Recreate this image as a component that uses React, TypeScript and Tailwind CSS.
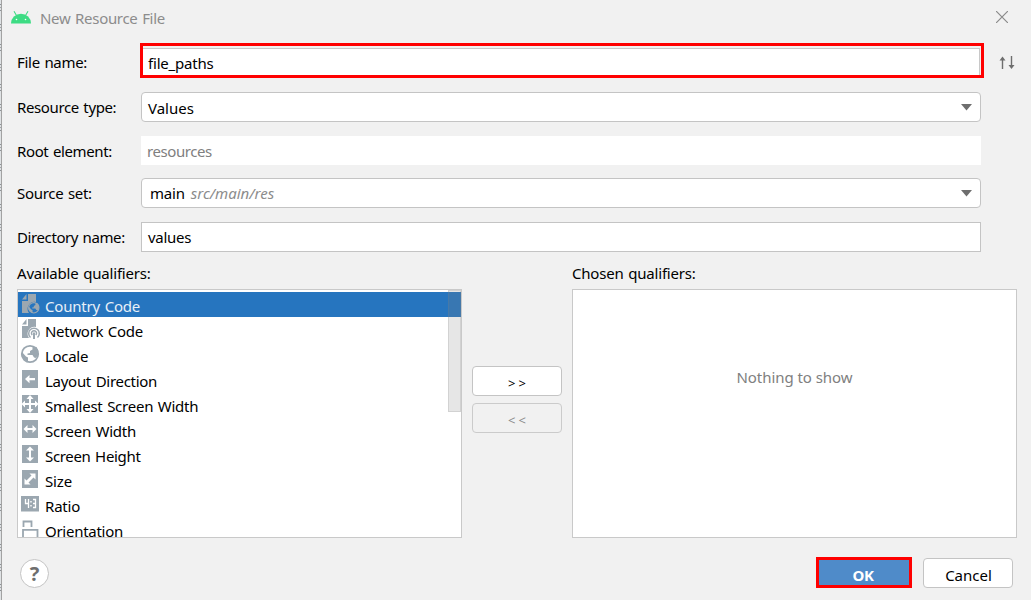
import React from "react";

const GREY = "#9ba7b0";

function Sheet() {
  return (
    <>
      <path d="M8 0h8v8a7 7 0 0 0-7 11H2V7h6z" fill={GREY} />
      <path d="M2 5.5L6.5 0v5.5z" fill={GREY} />
    </>
  );
}

function Globe() {
  return (
    <>
      <circle cx="10" cy="10" r="8.2" fill="none" stroke={GREY} strokeWidth="1.8" />
      <path d="M2 8l4 4.5 2 1v4.5l-4-2-2.500-4zM12.500 2.500v3l-2.500 1.500v2l-2.500.5v1.500h5l1.500 2.500 2 .5 2-3 .5-4-2-4z" fill={GREY} />
    </>
  );
}

function Box() {
  return <rect x="2" y="1" width="16" height="18" fill={GREY} />;
}

function QualifierIcon({ name }: { name: string }) {
  return (
    <svg viewBox="0 0 20 20" className="block h-5 w-5 shrink-0 overflow-visible">
      {name === "country" && (
        <>
          <Sheet />
          <g transform="translate(7.500 7.500) scale(.63)">
            <Globe />
          </g>
        </>
      )}
      {name === "network" && (
        <>
          <Sheet />
          <path d="M10.500 18.500a5.300 5.300 0 1 1 7 0M12.300 16a2.500 2.500 0 1 1 3.400 0" fill="none" stroke={GREY} strokeWidth="1.500" />
          <path d="M14 13.500V20" stroke={GREY} strokeWidth="2" />
        </>
      )}
      {name === "locale" && <Globe />}
      {name === "direction" && (
        <>
          <Box />
          <path d="M5 10l4.500-4v3H15v2.200H9.500v3z" fill="#fff" />
        </>
      )}
      {name === "smallest" && (
        <>
          <Box />
          <path d="M10 1l3.500 4H11v2.500H9V5H6.500zM10 19l-3.500-4H9v-2.500h2V15h2.500zM1.500 10L5 6.500V9h2.500v2H5v2.500zM18.500 10L15 13.500V11h-2.500V9H15V6.500z" fill="#fff" />
          <path d="M9 7v6h2V7zM7 9v2h6V9z" fill="#fff" />
        </>
      )}
      {name === "width" && (
        <>
          <Box />
          <path d="M3.500 10L7.500 6v3h5V6l4 4-4 4v-3h-5v3z" fill="#fff" />
        </>
      )}
      {name === "height" && (
        <>
          <Box />
          <path d="M10 2.500l4 4h-3v7h3l-4 4-4-4h3v-7H6z" fill="#fff" />
        </>
      )}
      {name === "size" && (
        <>
          <Box />
          <path d="M15.500 4.500v6l-2-2-5 5 2 2h-6v-6l2 2 5-5-2-2z" fill="#fff" />
        </>
      )}
      {name === "ratio" && (
        <>
          <rect x="1" y="2" width="18" height="15.500" fill={GREY} />
          <path d="M5.500 5v4.500h3.500M8.500 5v9M13 5.500h2.500v8H13M13 9.500h3" fill="none" stroke="#fff" strokeWidth="1.300" />
          <path d="M10.300 7h1.400v1.500h-1.400zM10.300 11h1.400v1.500h-1.400z" fill="#fff" />
        </>
      )}
      {name === "orientation" && (
        <path d="M3.500 8V2.500h8V8M3 20v-9.200h14.500V20" fill="none" stroke={GREY} strokeWidth="1.800" />
      )}
    </svg>
  );
}

const qualifiers = [
  { icon: "country", label: "Country Code", cls: "tracking-[-0.2px]" },
  { icon: "network", label: "Network Code", cls: "tracking-[-0.3px]" },
  { icon: "locale", label: "Locale", cls: "tracking-[-0.3px]" },
  { icon: "direction", label: "Layout Direction", cls: "tracking-[-0.28px]" },
  { icon: "smallest", label: "Smallest Screen Width", cls: "tracking-[-0.25px]" },
  { icon: "width", label: "Screen Width", cls: "tracking-[-0.27px]" },
  { icon: "height", label: "Screen Height", cls: "tracking-[-0.33px]" },
  { icon: "size", label: "Size", cls: "tracking-[-0.15px]" },
  { icon: "ratio", label: "Ratio", cls: "tracking-[-0.2px]" },
  { icon: "orientation", label: "Orientation", cls: "tracking-[-0.27px]" },
];

function Arrow() {
  return (
    <svg viewBox="0 0 11 7" className="mr-[8px] block h-[7px] w-[11px]">
      <path d="M0 0h11L5.500 6.500z" fill="#6e6e6e" />
    </svg>
  );
}

function Row({ label, labelClass, className, children }: { label: string; labelClass: string; className: string; children: React.ReactNode }) {
  return (
    <div className={`flex items-center ${className}`}>
      <div className={`w-[125px] shrink-0 pl-px [word-spacing:1px] ${labelClass}`}>{label}</div>
      {children}
    </div>
  );
}

function EdgeStrip() {
  return (
    <div className="flex w-[2px] shrink-0 flex-col overflow-hidden border-r border-[#a2a2a2] bg-[#dfe2e4]">
      {Array.from({ length: 30 }, (_, i) => (
        <div key={i} className="flex h-5 shrink-0 flex-col justify-start pt-[4px]">
          <div className="h-px bg-[#8d9296]" />
          <div className="mt-[2px] h-px bg-[#a3a8ac]" />
          <div className="mt-[2px] h-px bg-[#8d9296]" />
        </div>
      ))}
    </div>
  );
}

export default function App() {
  return (
    <div className="flex h-[600px] w-[1031px] overflow-hidden bg-[#f1f1f1] font-['Noto_Sans','Open_Sans',sans-serif] text-[15px] leading-[20px] whitespace-nowrap text-black">
      <EdgeStrip />
      <div className="flex min-w-0 flex-1 flex-col pl-[14px]">
        <header className="flex h-[43px] shrink-0 items-start">
          <svg viewBox="0 0 20 13" className="mt-[11px] -ml-[5px] block h-[13px] w-5">
            <path d="M0 12.500a10 9.800 0 0 1 20 0z" fill="#3ddc84" />
            <path d="M3 .3L5.500 4.500M17 .3L14.500 4.500" stroke="#3ddc84" strokeWidth="1.100" />
            <circle cx="5.500" cy="8.500" r=".8" fill="#fff" />
            <circle cx="14.500" cy="8.500" r=".8" fill="#fff" />
          </svg>
          <div className="mt-[8px] ml-[9px] flex-1 tracking-[-0.3px] text-[#8c8c8c] [word-spacing:1px]">New Resource File</div>
          <svg viewBox="0 0 12 12" className="mt-[11px] mr-[23px] block h-3 w-3">
            <path d="M0 0l12 12M12 0L0 12" stroke="#8a8a8a" strokeWidth="1.200" />
          </svg>
        </header>

        <Row label="File name:" labelClass="pt-[3px] tracking-[-0.3px]" className="h-[35px]">
          <div className="-ml-px flex h-[35px] w-[844px] shrink-0 border-[3px] border-[#ff0000] pt-[2px] pr-px">
            <div className="flex flex-1 items-center border-t border-r border-[#c8c8c8] bg-white pt-px pl-[5px] tracking-[-0.2px]">file_paths</div>
          </div>
          <svg viewBox="0 0 16 14" className="mt-[5px] ml-[15px] block h-[14px] w-4">
            <path d="M3.500 13V2M12.500 0v11" stroke="#6e6e6e" strokeWidth="1.400" />
            <path d="M.5 4.500L3.500.500l3 4zM9.500 9l3 4 3-4z" fill="#6e6e6e" />
          </svg>
        </Row>

        <Row label="Resource type:" labelClass="tracking-[-0.38px]" className="mt-[14px] h-[30px]">
          <div className="flex h-[30px] w-[840px] items-center justify-between rounded-[4px] border border-[#c4c4c4] bg-white pl-[6px]">
            <span className="pt-[2px]">Values</span>
            <Arrow />
          </div>
        </Row>

        <Row label="Root element:" labelClass="tracking-[-0.38px]" className="mt-[14px] h-[29px]">
          <div className="flex h-[29px] w-[840px] items-center bg-white pl-[6px] tracking-[-0.42px] text-[#808080]">resources</div>
        </Row>

        <Row label="Source set:" labelClass="tracking-[-0.3px]" className="mt-[13px] h-[30px]">
          <div className="flex h-[30px] w-[840px] items-center justify-between rounded-[4px] border border-[#c4c4c4] bg-white pl-[8px]">
            <span className="flex">
              <span className="tracking-[-0.2px]">main</span>
              <span className="ml-[6px] text-[#8c8c8c] italic">src/main/res</span>
            </span>
            <Arrow />
          </div>
        </Row>

        <Row label="Directory name:" labelClass="tracking-[-0.4px]" className="mt-[14px] h-[30px]">
          <div className="flex h-[30px] w-[840px] items-center border border-[#c4c4c4] bg-white pl-[6px] tracking-[-0.3px]">values</div>
        </Row>

        <div className="mt-[11px] flex h-[26px] shrink-0 tracking-[-0.2px] [word-spacing:1px]">
          <div className="w-[556px] pl-px">Available qualifiers:</div>
          <div>Chosen qualifiers:</div>
        </div>

        <main className="flex h-[249px] shrink-0 pl-px">
          <div className="relative flex w-[445px] shrink-0 flex-col overflow-hidden border border-[#c9c9c9] bg-white pt-[2px]">
            {qualifiers.map((q, i) => (
              <div key={q.icon} className={`flex h-[25px] shrink-0 items-start pl-[2px] ${i === 0 ? "bg-[#2675bf] text-[#e8f0f8]" : ""}`}>
                <div className="pt-[2px]">
                  <QualifierIcon name={q.icon} />
                </div>
                <span className={`ml-[5px] pt-[4px] [word-spacing:1px] ${q.cls}`}>{q.label}</span>
              </div>
            ))}
            <div className="absolute top-0 right-0 h-[122px] w-[13px] border border-[#808080]/20 bg-[#808080]/20" />
          </div>

          <div className="flex w-[110px] shrink-0 flex-col items-center gap-[7px] pt-[77px]">
            <button className="flex h-[30px] w-[90px] items-center justify-center rounded-[4px] border border-[#c4c4c4] bg-white pt-[4px] pl-[3px] text-[13px] tracking-[3px]">&gt;&gt;</button>
            <button className="flex h-[30px] w-[90px] items-center justify-center rounded-[4px] border border-[#cbcbcb] pt-[4px] pl-[3px] text-[13px] tracking-[3px] text-[#8c8c8c]">&lt;&lt;</button>
          </div>

          <div className="flex w-[445px] shrink-0 justify-center border border-[#c9c9c9] bg-white pt-[77px] tracking-[-0.05px] text-[#808080]">Nothing to show</div>
        </main>

        <footer className="flex flex-1 items-start pt-[19px]">
          <div className="mt-[2px] ml-[4px] flex h-[29px] w-[29px] items-center justify-center rounded-full border border-[#c4c4c4] bg-white text-[20px] font-bold text-[#6e6e6e]">?</div>
          <button className="ml-[767px] flex h-[31px] w-[96px] items-center justify-center border-[3px] border-[#ff0000] bg-[#4f8bc9] pt-[4px] pr-[2px] font-bold tracking-[-0.3px] text-white">OK</button>
          <button className="mt-px ml-[11px] flex h-[30px] w-[90px] items-center justify-center rounded-[4px] border border-[#c4c4c4] bg-white pt-[3px] pl-px">Cancel</button>
        </footer>
      </div>
    </div>
  );
}
